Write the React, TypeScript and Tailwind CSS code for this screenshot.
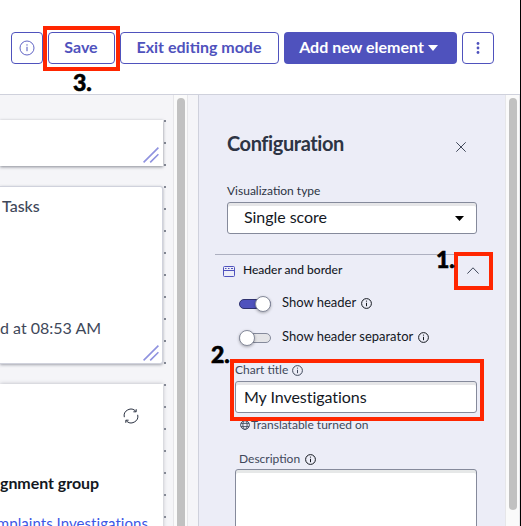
import React from "react";

function Info({ className = "" }: { className?: string }) {
  return (
    <svg className={"shrink-0 " + className} width="11" height="11" viewBox="0 0 11 11" fill="none" stroke="currentColor">
      <circle cx="5.5" cy="5.5" r="4.9" strokeWidth="1" />
      <path d="M5.5 4.8v3.4" strokeWidth="1" />
      <circle cx="5.5" cy="3.1" r="0.6" fill="currentColor" stroke="none" />
    </svg>
  );
}

function Grip({ className }: { className: string }) {
  return (
    <svg className={"absolute " + className} width="16" height="16" viewBox="0 0 16 16" stroke="#8f92df" strokeWidth="1.6">
      <path d="M0.6 15.4L15.4 0.6M7.2 15.4L15.4 7.2" />
    </svg>
  );
}

function Scrollbar({ full = false }: { full?: boolean }) {
  return (
    <div className="w-[15px] shrink-0 border-x border-[#e6e6e9] bg-[#fafafa] pt-[3px] pl-[3px]">
      <div className={"w-2 bg-[#c1c1c1] " + (full ? "h-[440px] rounded-t-full" : "h-[412px] rounded-full")} />
    </div>
  );
}

const dots = Array.from({ length: 19 }, (_, i) => i);

export default function App() {
  return (
    <div className="relative flex h-[526px] w-[521px] flex-col overflow-hidden border-r border-black bg-white font-['Lato','Noto_Sans',sans-serif] text-[#14181f]">
      <header className="flex h-[95px] shrink-0 items-start gap-[5px] border-b border-[#cfd1dc] pt-8 pl-[11px] text-[16px] font-bold whitespace-nowrap text-[#4f52bd]">
        <button className="flex h-8 w-8 items-center justify-center rounded-[4px] border border-[#4f52bd]">
          <svg width="16" height="16" viewBox="0 0 16 16" fill="none" stroke="currentColor">
            <circle cx="8" cy="8" r="7" strokeWidth="0.9" />
            <path d="M8 6.8v4.4" strokeWidth="1" />
            <circle cx="8" cy="4.9" r="0.7" fill="currentColor" stroke="none" />
          </svg>
        </button>
        <button className="h-8 w-[67px] rounded-[4px] border border-[#4f52bd] pr-px pb-0.5">Save</button>
        <button className="h-8 w-[159px] rounded-[4px] border border-[#4f52bd] pr-px pb-0.5">Exit editing mode</button>
        <button className="flex h-8 w-[173px] items-center justify-center gap-1 rounded-[4px] bg-[#4f52bd] pr-1 pb-0.5 text-white">
          Add new element
          <svg className="mt-0.5" width="10" height="6" viewBox="0 0 10 6" fill="currentColor"><path d="M0 0h10L5 6z" /></svg>
        </button>
        <button className="flex h-8 w-8 items-center justify-center rounded-[4px] border border-[#4f52bd]">
          <svg width="4" height="12" viewBox="0 0 4 12" fill="currentColor"><circle cx="2" cy="1.5" r="1.4" /><circle cx="2" cy="6" r="1.4" /><circle cx="2" cy="10.5" r="1.4" /></svg>
        </button>
      </header>

      <div className="flex min-h-0 flex-1">
        <main className="flex w-[173px] shrink-0 bg-[#f5f5f8]">
          <div className="flex w-[163px] shrink-0 flex-col pt-[25px] whitespace-nowrap">
            <section className="relative h-[46px] shrink-0 bg-white shadow-[0_1px_3px_rgba(60,65,80,0.6)]"><Grip className="right-1 bottom-[3px]" /></section>
            <section className="relative mt-[20px] h-[178px] shrink-0 rounded-r-[3px] border-y border-r border-[#d0d2dc] bg-white shadow-[0_1px_3px_rgba(60,65,80,0.45)]">
              <div className="mt-[9px] pl-[2px] text-[16px] leading-5 font-medium text-[#40485a]">Tasks</div>
              <div className="mt-[102px] text-[16px] leading-5 text-[#40485a]">d at 08:53 AM</div>
              <Grip className="right-[3px] bottom-[2px]" />
            </section>
            <section className="mt-[20px] h-[160px] shrink-0 overflow-hidden bg-white shadow-[0_0_4px_rgba(60,65,80,0.35)]">
              <svg className="mt-[24px] ml-[123px] text-[#2b3242]" width="16" height="16" viewBox="0 0 16 16" fill="none" stroke="currentColor" strokeWidth="1">
                <path d="M1.3 9.2A6.7 6.7 0 0 1 12.8 3.3M14.7 6.8A6.7 6.7 0 0 1 3.2 12.7M13.2 1.2v2.6h-2.8M2.8 14.8v-2.6h2.8" />
              </svg>
              <div className="mt-[49px] text-[16px] leading-5 font-bold tracking-[-0.05px]">gnment group</div>
              <div className="mt-[20px] flex w-[148px] justify-end text-[15px] leading-5 tracking-[0.05px] text-[#3c58e6]">mplaints Investigations</div>
            </section>
          </div>
          <div className="flex flex-col gap-[20px] pt-[25px] pl-px">
            {dots.map((d) => <i key={d} className="h-[2px] w-[2px] shrink-0 bg-[#858995]" />)}
          </div>
        </main>
        <Scrollbar full />
        <div className="w-[10px] shrink-0 bg-[#f5f5f8]" />
        <aside className="flex w-[307px] shrink-0 flex-col overflow-hidden border-l border-[#cfd1dc] bg-[#ecedf7] whitespace-nowrap">
          <div className="flex items-start pt-[36px] pl-[28px]">
            <h1 className="w-[229px] text-[20px] leading-6 font-bold tracking-[-0.42px] text-[#2d3444]">Configuration</h1>
            <svg className="mt-[11px]" width="10" height="10" viewBox="0 0 10 10" stroke="#40485a" strokeWidth="1"><path d="M0.3 0.3l9.4 9.4M9.7 0.3L0.3 9.7" /></svg>
          </div>
          <label className="mt-[28px] pl-[28px] text-[12px] leading-4 text-[#2d3444]">Visualization type</label>
          <div className="mt-[3px] ml-[28px] flex h-8 w-[250px] shrink-0 items-center justify-between rounded-[3px] border border-[#858a9b] bg-white pr-3 pl-4 text-[16px] shadow-[inset_0_3px_0_#e6e6e8]">
            <span className="pb-0.5 tracking-[-0.05px]">Single score</span>
            <svg width="9" height="5" viewBox="0 0 9 5"><path d="M0 0h9L4.5 5z" /></svg>
          </div>
          <div className="mt-[20px] ml-[16px] flex h-[31px] w-[278px] shrink-0 items-center border-t border-[#adb0c0] pl-2 text-[12px] font-medium">
            <svg className="mt-0.5" width="12" height="11" viewBox="0 0 12 11" fill="none" stroke="#4f52bd"><rect x=".5" y=".5" width="11" height="10" rx="1" /><path d="M.5 4.5h11M2 2.5h1.5M5 2.5h1.5M8 2.5h2" /></svg>
            <span className="ml-[8px] w-[224px]">Header and border</span>
            <svg width="12" height="7" viewBox="0 0 12 7" fill="none" stroke="#40485a"><path d="M0.4 6.6L6 0.8l5.6 5.8" /></svg>
          </div>
          <div className="mt-[9px] ml-[40px] flex h-5 shrink-0 items-center text-[13px]">
            <div className="flex h-[10px] w-8 items-center justify-end rounded-full border border-[#2f326f] bg-[#4f52bd]"><i className="-mr-px h-4 w-4 shrink-0 rounded-full border border-[#858a9b] bg-white shadow-[0_1px_3px_rgba(0,0,0,.3)]" /></div>
            <span className="ml-[11px] pb-[3px]">Show header</span><Info className="mb-px ml-[5px]" />
          </div>
          <div className="mt-[14px] ml-[40px] flex h-5 shrink-0 items-center text-[13px]">
            <div className="flex h-[10px] w-8 items-center rounded-full border border-[#858a9b] bg-[#e4e4e7]"><i className="-ml-px h-4 w-4 shrink-0 rounded-full border border-[#858a9b] bg-white shadow-[0_1px_3px_rgba(0,0,0,.3)]" /></div>
            <span className="ml-[11px] pb-[3px]">Show header separator</span><Info className="mb-px ml-[5px]" />
          </div>
          <div className="mt-[14px] ml-[36px] flex h-4 shrink-0 items-center text-[12px] leading-4 text-[#40485a]">Chart title<Info className="ml-[4px]" /></div>
          <div className="mt-[3px] ml-[36px] flex h-8 w-[242px] shrink-0 items-center rounded-[3px] border border-[#858a9b] bg-white pl-2 text-[16px] tracking-[-0.05px] shadow-[inset_0_3px_0_#e6e6e8]">My Investigations</div>
          <div className="mt-[4px] ml-[41px] flex h-4 shrink-0 items-center gap-[1px] text-[12px] leading-4 text-[#40485a]">
            <svg width="10" height="10" viewBox="0 0 10 10" fill="none" stroke="currentColor" strokeWidth=".9"><circle cx="5" cy="5" r="4.4" /><ellipse cx="5" cy="5" rx="2.1" ry="4.4" /><path d="M.9 3.4h8.2M.9 6.6h8.2" /></svg>
            Translatable turned on
          </div>
          <div className="mt-[18px] ml-[40px] flex h-4 shrink-0 items-center text-[12px] leading-4 text-[#40485a]">Description<Info className="ml-[5px] text-[#14181f]" /></div>
          <div className="relative mt-[2px] ml-[36px] h-[60px] w-[242px] shrink-0 rounded-[3px] border border-[#858a9b] bg-white shadow-[inset_0_3px_0_#e6e8e8]" />
        </aside>
        <Scrollbar />
      </div>

      <div className="absolute top-[26px] left-[43px] h-[45px] w-[77px] border-4 border-[#ff2600]" />
      <div className="absolute top-[252px] left-[454px] h-[38px] w-[39px] border-4 border-[#ff2600]" />
      <div className="absolute top-[359px] left-[230px] h-[62px] w-[254px] border-4 border-[#ff2600]" />
      <b className="absolute top-[70px] left-[73px] text-[23px] leading-6 font-black text-black [-webkit-text-stroke:0.6px_black]">3.</b>
      <b className="absolute top-[247px] left-[436px] text-[23px] leading-6 font-black text-black [-webkit-text-stroke:0.6px_black]">1.</b>
      <b className="absolute top-[342px] left-[211px] text-[23px] leading-6 font-black text-black [-webkit-text-stroke:0.6px_black]">2.</b>
    </div>
  );
}
